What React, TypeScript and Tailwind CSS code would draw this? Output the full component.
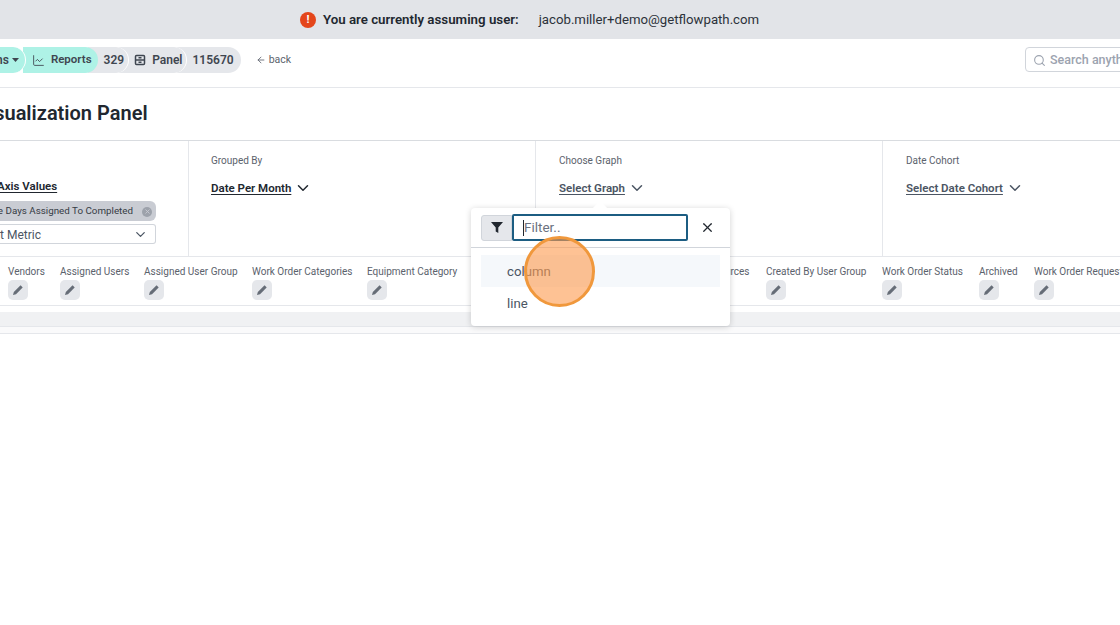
import React from "react";
import { ChevronDown, Search, X, ArrowLeft, LineChart } from "lucide-react";

const font = { fontFamily: 'Roboto, sans-serif' };

function PencilBtn() {
  return (
    <div className="w-5 h-5 rounded-[5px] bg-[#e5e7eb] flex items-center justify-center">
      <svg width="12" height="12" viewBox="0 0 12 12" fill="#666d77">
        <path d="M8.6 1.300 10.700 3.400 4 10.200 1 11 1.800 8z" />
      </svg>
    </div>
  );
}

function Filter({ label, className }: { label: string; className: string }) {
  return (
    <div className={`shrink-0 flex flex-col gap-[1px] ${className}`}>
      <div className="text-[10px] leading-[14px] text-[#5b626c] whitespace-nowrap">{label}</div>
      <PencilBtn />
    </div>
  );
}

function Column({ label, value, dark, className }: { label: string; value: string; dark?: boolean; className: string }) {
  return (
    <div className={`shrink-0 h-full border-r border-[#e5e7eb] pt-[13px] ${className}`}>
      <div className="text-[10px] leading-[14px] text-[#5b626c]">{label}</div>
      <div className="mt-[11px] flex items-center gap-[3px]">
        <span className={`text-[11.500px] leading-[14px] font-semibold underline underline-offset-2 ${dark ? "text-[#21272f]" : "text-[#4b5563]"}`}>{value}</span>
        <ChevronDown size={18} strokeWidth={2} className={dark ? "text-[#21272f]" : "text-[#4b5563]"} />
      </div>
    </div>
  );
}

export default function App() {
  return (
    <div style={font} className="relative w-[1120px] h-[625px] overflow-hidden bg-white text-[#21272f]">
      <div className="h-[39px] bg-[#e2e4e8] flex items-center justify-center gap-[20px] pr-[61px]">
        <div className="flex items-center gap-[7px]">
          <div className="w-4 h-4 rounded-full bg-[#e4461b] flex items-center justify-center text-white text-[11px] font-bold leading-none">!</div>
          <span className="text-[13.300px] font-semibold">You are currently assuming user:</span>
        </div>
        <span className="text-[13.200px] text-[#2c323a]">jacob.miller+demo@getflowpath.com</span>
      </div>

      <div className="h-[49px] border-b border-[#e5e7eb] flex items-start pt-[8px] justify-between">
        <div className="flex items-center">
          <div className="flex items-center h-[26px] text-[12px] font-semibold text-[#3f4650]">
            <div className="h-full -ml-[4px] pr-[6px] bg-[#aef2e6] rounded-r-full flex items-center gap-[3px] border-r border-white z-30">
              <span>ns</span>
              <svg width="7" height="4" viewBox="0 0 7 4" fill="#3f4650"><path d="M0 0h7L3.500 4z" /></svg>
            </div>
            <div className="h-full -ml-[3px] pl-[9px] pr-[6px] bg-[#aef2e6] rounded-r-full flex items-center gap-[6px] z-20 text-[11.500px]">
              <LineChart size={13} strokeWidth={1.6} />
              <span>Reports</span>
            </div>
            <div className="h-full -ml-[10px] pl-[16px] pr-[4px] bg-[#e5e7eb] rounded-r-full flex items-center border-r border-white z-10">329</div>
            <div className="h-full -ml-[10px] pl-[15px] pr-[4px] bg-[#e5e7eb] rounded-r-full flex items-center gap-[6px] border-r border-white z-[5]">
              <svg width="12" height="12" viewBox="0 0 12 12" fill="none" stroke="#3f4650" strokeWidth="1.5"><rect x="1.500" y="1.500" width="9" height="9" rx="1" /><path d="M1.500 6h9M4.500 3.800h3M4.500 8.200h3" /></svg>
              <span>Panel</span>
            </div>
            <div className="h-full -ml-[10px] pl-[15px] pr-[7px] bg-[#e5e7eb] rounded-r-full flex items-center">115670</div>
          </div>
          <div className="ml-[15px] flex items-center gap-[3px] text-[10.500px] text-[#5b626c]">
            <ArrowLeft size={10} />
            <span>back</span>
          </div>
        </div>
        <div className="w-[110px] h-[25px] -mr-[15px] border border-[#d1d5db] rounded-[4px] flex items-center gap-[4px] pl-[7px] pt-[1px] text-[12.500px] font-medium text-[#9ca3af] whitespace-nowrap overflow-hidden shrink-0">
          <Search size={13} className="shrink-0" />
          <span>Search anything</span>
        </div>
      </div>

      <div className="h-[53px] border-b border-[#d9dce0] flex items-center pb-[3px] overflow-hidden">
        <div className="text-[20px] font-semibold whitespace-nowrap -ml-[24px] text-[#21272f]">Visualization Panel</div>
      </div>

      <div className="h-[116px] border-b border-[#e5e7eb] flex overflow-hidden">
        <div className="shrink-0 w-[189px] h-full border-r border-[#e5e7eb]">
          <div className="mt-[38px] -ml-[3px] text-[11.500px] leading-[14px] font-semibold underline underline-offset-2 whitespace-nowrap">Axis Values</div>
          <div className="mt-[8px] w-[156px] h-[20px] pt-[1px] bg-[#c9ccd3] rounded-r-[6px] flex items-center justify-end pr-[4px] gap-[9px] text-[9.800px] text-[#353b44] whitespace-nowrap overflow-hidden">
            <span>e Days Assigned To Completed</span>
            <div className="shrink-0 w-[10px] h-[10px] rounded-full bg-[#9da2ab] flex items-center justify-center"><X size={7} className="text-[#c9ccd3]" strokeWidth={3} /></div>
          </div>
          <div className="mt-[3px] w-[156px] h-[20px] pt-[1px] bg-white border border-l-0 border-[#d1d5db] rounded-r-[3px] flex items-center justify-between pr-[7px] text-[12px] text-[#4b5563]">
            <span>t Metric</span>
            <ChevronDown size={15} />
          </div>
        </div>
        <Column className="w-[347px] pl-[22px]" label="Grouped By" value="Date Per Month" dark />
        <Column className="w-[347px] pl-[23px]" label="Choose Graph" value="Select Graph" />
        <Column className="w-[300px] pl-[23px] border-r-0" label="Date Cohort" value="Select Date Cohort" />
      </div>

      <div className="h-[49px] border-b border-[#e5e7eb] flex pt-[8px] pl-[8px] overflow-hidden">
        <Filter className="w-[52px]" label="Vendors" />
        <Filter className="w-[84px]" label="Assigned Users" />
        <Filter className="w-[108px]" label="Assigned User Group" />
        <Filter className="w-[115px]" label="Work Order Categories" />
        <Filter className="w-[294px]" label="Equipment Category" />
        <Filter className="w-[105px]" label="Work Order Sources" />
        <Filter className="w-[116px]" label="Created By User Group" />
        <Filter className="w-[97px]" label="Work Order Status" />
        <Filter className="w-[55px]" label="Archived" />
        <Filter className="w-[100px]" label="Work Order Requester" />
      </div>

      <div className="mt-[6px] h-[15px] bg-[#f0f1f3] border-b border-[#e5e7eb]" />
      <div className="h-[7px] bg-[#fafafb] border-b border-[#e5e7eb]" />

      <div className="absolute left-[471px] top-[208px] w-[259px] h-[118px] bg-white rounded-[4px] shadow-[0_1px_6px_rgba(0,0,0,0.18)]">
        <div className="absolute left-[124px] -top-[5px] w-[10px] h-[10px] rotate-45 bg-white" />
        <div className="relative h-[40px] border-b border-[#d1d5db] flex items-center pl-[10px]">
          <div className="w-[31px] h-[26px] bg-[#e5e7eb] border border-[#d1d5db] rounded-l-[3px] flex items-center justify-center">
            <svg width="12" height="11" viewBox="0 0 12 11" fill="#21272f"><path d="M0 0h12L7.300 5.500V11L4.700 9.500v-4z" /></svg>
          </div>
          <div className="w-[176px] h-[27px] border-2 border-[#1c5d82] rounded-[2px] pl-[9px] flex items-center text-[13.500px] text-[#6b7280]">
            <span className="w-px h-[16px] bg-[#21272f]" />
            Filter..
          </div>
          <X size={15} className="ml-[12px] text-[#21272f]" />
        </div>
        <div className="mt-[7px] mx-[10px] h-[32px] pt-[1px] bg-[#f5f8fb] flex items-center pl-[26px] text-[13.200px] text-[#4b5563]">column</div>
        <div className="mx-[10px] h-[32px] pt-[1px] flex items-center pl-[26px] text-[13.200px] text-[#4b5563]">line</div>
      </div>

      <div className="absolute left-[524px] top-[236px] w-[71px] h-[71px] rounded-full bg-[#fd9a4d]/60 border-[3px] border-[#f0983c]" />
    </div>
  );
}
